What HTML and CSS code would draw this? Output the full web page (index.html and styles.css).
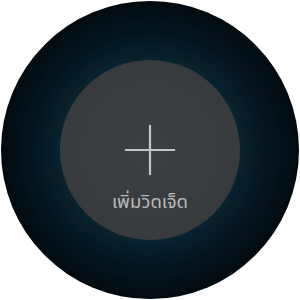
FILE: index.html
```html
<!DOCTYPE html>
<html lang="th">
<head>
<meta charset="utf-8">
<link rel="stylesheet" href="styles.css">
</head>
<body>
<div class="watch">
  <div class="tile">
    <svg class="plus" width="50" height="50" viewBox="0 0 50 50">
      <path d="M25 0V50M0 25H50" stroke="#c4c5c6" stroke-width="2.2" fill="none"/>
    </svg>
    <div class="label">เพิ่มวิดเจ็ด</div>
  </div>
</div>
</body>
</html>
```
FILE: styles.css
```css
html, body {
  margin: 0;
  padding: 0;
  background: #ffffff;
}
body {
  width: 300px;
  height: 300px;
  display: flex;
  align-items: center;
  justify-content: center;
}
.watch {
  width: 298px;
  height: 298px;
  border-radius: 50%;
  background: radial-gradient(circle at center, #08222f 0, #08222f 90px, #05151e 118px, #020a0f 149px);
  display: flex;
  align-items: center;
  justify-content: center;
}
.tile {
  width: 180px;
  height: 180px;
  border-radius: 50%;
  background: radial-gradient(circle at center, #3b3f42 0, #383b3d 90px);
  display: flex;
  flex-direction: column;
  align-items: center;
  box-sizing: border-box;
  padding-top: 65px;
}
.plus {
  display: block;
}
.label {
  margin-top: 14px;
  font-family: "Noto Sans", "Noto Sans Thai", "DejaVu Sans", sans-serif;
  font-size: 18.5px;
  line-height: 24px;
  color: #b9babb;
}
```
